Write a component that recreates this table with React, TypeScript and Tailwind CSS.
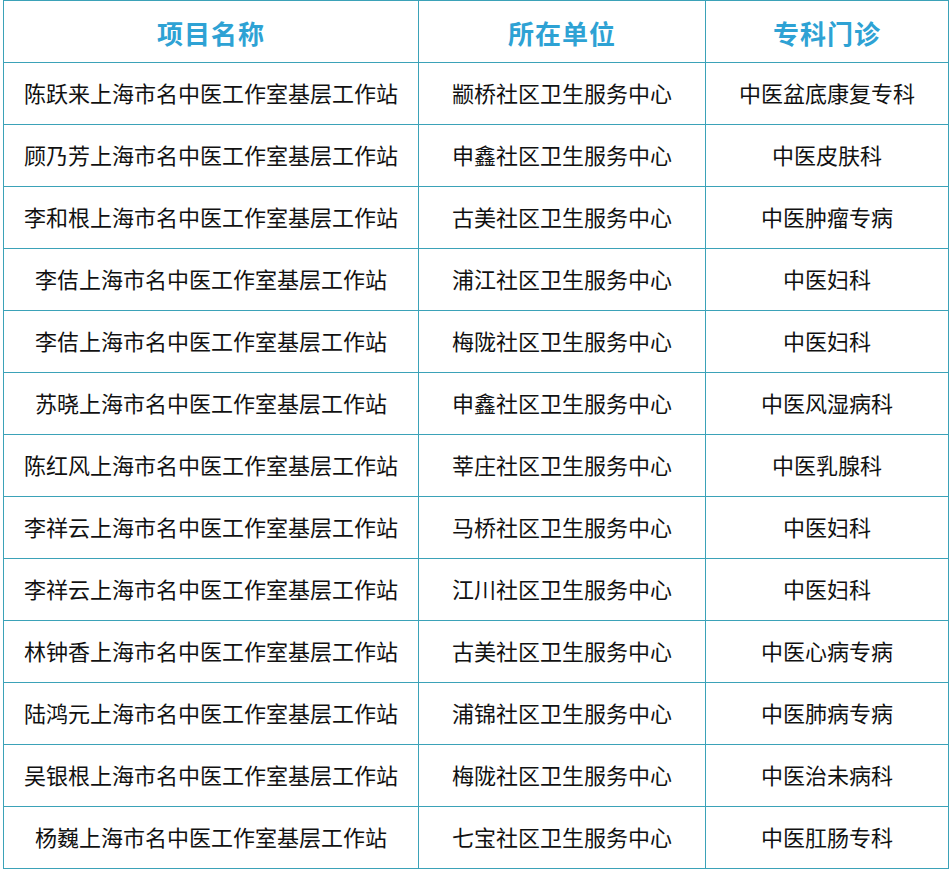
import React from "react";

const rows: [string, string, string][] = [
  ["陈跃来上海市名中医工作室基层工作站", "颛桥社区卫生服务中心", "中医盆底康复专科"],
  ["顾乃芳上海市名中医工作室基层工作站", "申鑫社区卫生服务中心", "中医皮肤科"],
  ["李和根上海市名中医工作室基层工作站", "古美社区卫生服务中心", "中医肿瘤专病"],
  ["李佶上海市名中医工作室基层工作站", "浦江社区卫生服务中心", "中医妇科"],
  ["李佶上海市名中医工作室基层工作站", "梅陇社区卫生服务中心", "中医妇科"],
  ["苏晓上海市名中医工作室基层工作站", "申鑫社区卫生服务中心", "中医风湿病科"],
  ["陈红风上海市名中医工作室基层工作站", "莘庄社区卫生服务中心", "中医乳腺科"],
  ["李祥云上海市名中医工作室基层工作站", "马桥社区卫生服务中心", "中医妇科"],
  ["李祥云上海市名中医工作室基层工作站", "江川社区卫生服务中心", "中医妇科"],
  ["林钟香上海市名中医工作室基层工作站", "古美社区卫生服务中心", "中医心病专病"],
  ["陆鸿元上海市名中医工作室基层工作站", "浦锦社区卫生服务中心", "中医肺病专病"],
  ["吴银根上海市名中医工作室基层工作站", "梅陇社区卫生服务中心", "中医治未病科"],
  ["杨巍上海市名中医工作室基层工作站", "七宝社区卫生服务中心", "中医肛肠专科"],
];

export default function App() {
  return (
    <div
      className="w-[950px] h-[869px] bg-white pl-[3px]"
      style={{ fontFamily: '"Noto Sans CJK SC", "Noto Sans", sans-serif' }}
    >
      <table className="border-collapse table-fixed w-[945px]">
        <colgroup>
          <col className="w-[415px]" />
          <col className="w-[287px]" />
          <col className="w-[243px]" />
        </colgroup>
        <thead>
          <tr className="h-[62px]">
            {["项目名称", "所在单位", "专科门诊"].map((h) => (
              <th
                key={h}
                className="border border-[#3ba2b8] text-center align-middle text-[26px] font-bold text-[#2ea2d4] tracking-[1px] p-0 pt-[2px]"
              >
                {h}
              </th>
            ))}
          </tr>
        </thead>
        <tbody>
          {rows.map((r, i) => (
            <tr key={i} className="h-[62px]">
              {r.map((c, j) => (
                <td
                  key={j}
                  className="border border-[#3ba2b8] text-center align-middle text-[22px] text-[#111111] p-0 pb-[3px] leading-none"
                >
                  {c}
                </td>
              ))}
            </tr>
          ))}
        </tbody>
      </table>
    </div>
  );
}
